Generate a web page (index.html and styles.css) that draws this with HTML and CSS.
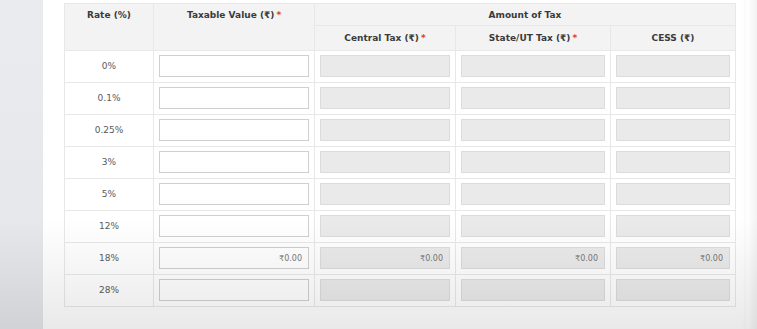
FILE: index.html
```html
<!DOCTYPE html>
<html lang="en">
<head>
<meta charset="UTF-8">
<meta name="viewport" content="width=device-width, initial-scale=1.0">
<title>Rate-wise Tax Details</title>
<link rel="stylesheet" href="styles.css">
</head>
<body>

<div class="sidebar"></div>

<div class="main">
  <table class="tax-table">
    <colgroup>
      <col class="col-rate">
      <col class="col-taxable">
      <col class="col-central">
      <col class="col-state">
      <col class="col-cess">
    </colgroup>
    <thead>
      <tr>
        <th rowspan="2" class="top">Rate (%)</th>
        <th rowspan="2" class="top">Taxable Value (₹)<span class="req">*</span></th>
        <th colspan="3" class="group">Amount of Tax</th>
      </tr>
      <tr>
        <th>Central Tax (₹)<span class="req">*</span></th>
        <th>State/UT Tax (₹)<span class="req">*</span></th>
        <th>CESS (₹)</th>
      </tr>
    </thead>
    <tbody>
      <tr>
        <td class="rate">0%</td>
        <td><input type="text"></td>
        <td><input type="text" class="calc" disabled></td>
        <td><input type="text" class="calc" disabled></td>
        <td><input type="text" class="calc" disabled></td>
      </tr>
      <tr>
        <td class="rate">0.1%</td>
        <td><input type="text"></td>
        <td><input type="text" class="calc" disabled></td>
        <td><input type="text" class="calc" disabled></td>
        <td><input type="text" class="calc" disabled></td>
      </tr>
      <tr>
        <td class="rate">0.25%</td>
        <td><input type="text"></td>
        <td><input type="text" class="calc" disabled></td>
        <td><input type="text" class="calc" disabled></td>
        <td><input type="text" class="calc" disabled></td>
      </tr>
      <tr>
        <td class="rate">3%</td>
        <td><input type="text"></td>
        <td><input type="text" class="calc" disabled></td>
        <td><input type="text" class="calc" disabled></td>
        <td><input type="text" class="calc" disabled></td>
      </tr>
      <tr>
        <td class="rate">5%</td>
        <td><input type="text"></td>
        <td><input type="text" class="calc" disabled></td>
        <td><input type="text" class="calc" disabled></td>
        <td><input type="text" class="calc" disabled></td>
      </tr>
      <tr>
        <td class="rate">12%</td>
        <td><input type="text"></td>
        <td><input type="text" class="calc" disabled></td>
        <td><input type="text" class="calc" disabled></td>
        <td><input type="text" class="calc" disabled></td>
      </tr>
      <tr>
        <td class="rate">18%</td>
        <td><input type="text" value="₹0.00"></td>
        <td><input type="text" class="calc" value="₹0.00" disabled></td>
        <td><input type="text" class="calc" value="₹0.00" disabled></td>
        <td><input type="text" class="calc" value="₹0.00" disabled></td>
      </tr>
      <tr>
        <td class="rate">28%</td>
        <td><input type="text"></td>
        <td><input type="text" class="calc" disabled></td>
        <td><input type="text" class="calc" disabled></td>
        <td><input type="text" class="calc" disabled></td>
      </tr>
    </tbody>
  </table>
</div>

<div class="fade"></div>

</body>
</html>
```

FILE: styles.css
```css
html, body {
  height: 100%;
  margin: 0;
}
body {
  display: flex;
  background: #fff;
  font-family: "DejaVu Sans", Verdana, sans-serif;
  color: #444;
  overflow: hidden;
}
.sidebar {
  width: 43px;
  flex-shrink: 0;
  background: linear-gradient(to bottom, #e9ebee, #e4e6e9);
}
.main {
  flex: 1;
  padding: 3px 0 0 21px;
  background: linear-gradient(to right, #fff 0, #fff 700px, #f9f9f9 702px, #fff 704px, #f2f2f2 714px);
}
.tax-table {
  border-collapse: collapse;
  table-layout: fixed;
  width: 671px;
  background: #fff;
}
.col-rate { width: 89px; }
.col-taxable { width: 161px; }
.col-central { width: 141px; }
.col-state { width: 155px; }
.col-cess { width: 125px; }

.tax-table th,
.tax-table td {
  border: 1px solid #e8e8e8;
}
.tax-table th {
  background: #f3f3f3;
  font-size: 9px;
  font-weight: bold;
  color: #3a3a3a;
  height: 24px;
  padding: 0;
}
.tax-table th.top {
  vertical-align: top;
  padding-top: 6px;
}
.tax-table th.group {
  height: 21px;
}
.req {
  color: #d43f3a;
  margin-left: 2px;
}
.tax-table td {
  height: 22px;
  padding: 4px 5px 5px 5px;
  font-size: 9px;
}
.tax-table td.rate {
  text-align: center;
  color: #5a5a5a;
}
input {
  display: block;
  box-sizing: border-box;
  width: 100%;
  height: 22px;
  margin: 0;
  padding: 0 6px;
  border: 1px solid #cfcfcf;
  background: #fff;
  font-family: "DejaVu Sans", Verdana, sans-serif;
  font-size: 8px;
  color: #777;
  text-align: right;
}
input.calc {
  background: #eaeaea;
  border-color: #dcdcdc;
}

/* soft darkening toward the bottom of the panel */
.fade {
  position: absolute;
  left: 0;
  right: 0;
  bottom: 0;
  height: 110px;
  background: linear-gradient(to bottom, rgba(0, 0, 0, 0), rgba(0, 0, 0, 0.085));
  pointer-events: none;
}
```
